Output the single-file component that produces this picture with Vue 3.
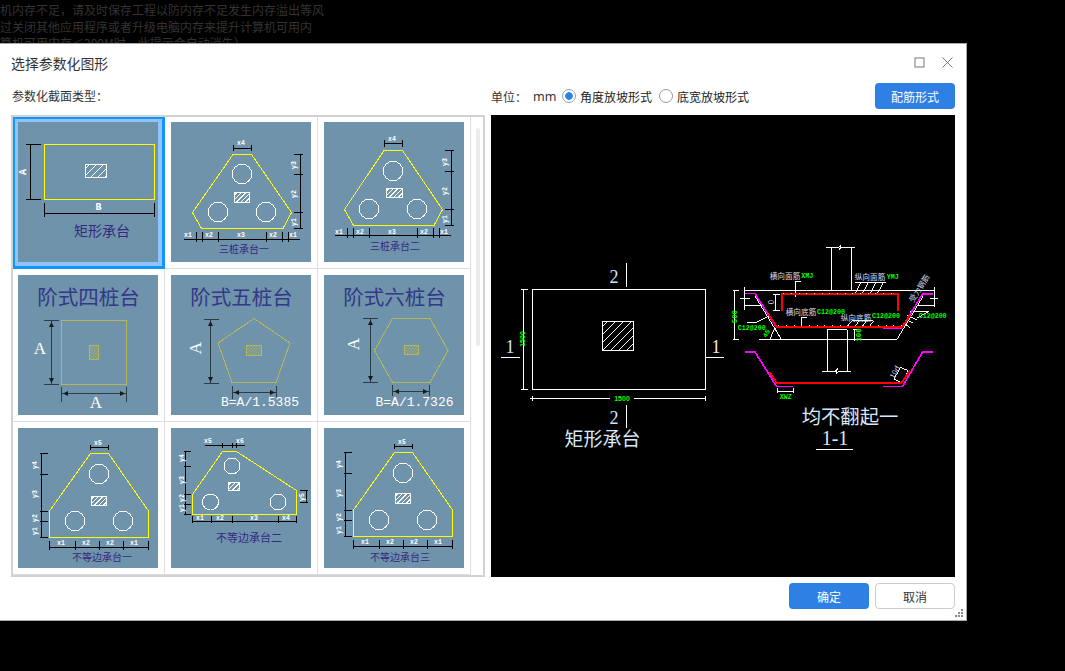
<script setup>
const L = (a, b, c, d) => `M${a} ${b}L${c} ${d}`
const H = (y, a, b) => L(a, y, b, y)
const V = (x, a, b) => L(x, a, x, b)
const hatch = (x, y, w, h, step) => {
  let d = ''
  for (let s = step * 0.6; s < w + h; s += step) {
    const x1 = x + Math.max(0, s - h)
    const y1 = y + Math.min(h, s)
    const x2 = x + Math.min(w, s)
    const y2 = y + Math.max(0, s - w)
    d += L(x1.toFixed(1), y1.toFixed(1), x2.toFixed(1), y2.toFixed(1))
  }
  return d
}
const m = (s, x, y, r) => ({ s, x, y, r })

const triA = {
  edge: 'M62 32.5H80.5L120.5 90.5L112 106.5H30.5L21.5 90.5Z',
  ink:
    H(26.5, 62.5, 80.5) + V(62.5, 23, 29) + V(80.5, 23, 29) +
    V(129.5, 32.5, 106.5) + H(32.5, 123, 132) + H(52.5, 123, 132) + H(90.5, 123, 132) + H(106.5, 123, 132) +
    H(117.5, 13, 129) + [25.5, 31.5, 47.5, 95.5, 111.5, 117.5].map((x) => V(x, 110, 120)).join(''),
  holes: [[71, 52], [47, 90], [95, 90]],
  box: [63.5, 70.5, 15, 10],
  marks: [m('x4', 70, 21), m('x1', 17, 113), m('x2', 38, 113), m('x3', 70, 113), m('x2', 102, 113), m('x1', 122, 113), m('y3', 123, 43, 1), m('y2', 123, 72, 1), m('y1', 123, 100, 1)]
}
const triB = {
  edge: 'M60 28.5H78.5L118.5 87.5L110 103.5H29.5L20.5 87.5Z',
  ink:
    H(21.5, 60.5, 78.5) + V(60.5, 18, 25) + V(78.5, 18, 25) +
    V(127.5, 28.5, 103.5) + H(28.5, 121, 130) + H(49.5, 121, 130) + H(87.5, 121, 130) + H(103.5, 121, 130) +
    H(113.5, 11, 127) + [23.5, 29.5, 45.5, 93.5, 109.5, 115.5].map((x) => V(x, 106, 116)).join(''),
  holes: [[69, 49], [45, 87], [93, 87]],
  box: [62.5, 66.5, 16, 9],
  marks: [m('x4', 68, 17), m('x1', 15, 110), m('x2', 36, 110), m('x3', 68, 110), m('x2', 100, 110), m('x1', 120, 110), m('y3', 121, 40, 1), m('y2', 121, 69, 1), m('y1', 121, 97, 1)]
}
const ineqA = (dx, dy) => ({
  edge: `M${72.5 + dx} ${25.5 + dy}H${90.5 + dx}L${130.5 + dx} ${83 + dy}V${109.5 + dy}H${31.5 + dx}V${83 + dy}Z`,
  ink:
    H(19.5 + dy, 72.5 + dx, 90.5 + dx) + V(72.5 + dx, 17 + dy, 22 + dy) + V(90.5 + dx, 17 + dy, 22 + dy) +
    V(23.5 + dx, 25.5 + dy, 109.5 + dy) +
    [25.5, 46.5, 83.5, 93.5, 109.5].map((y) => H(y + dy, 22 + dx, 30 + dx)).join('') +
    H(119.5 + dy, 31.5 + dx, 130.5 + dx) +
    [31.5, 57.5, 81.5, 105.5, 130.5].map((x) => V(x + dx, 113 + dy, 122 + dy)).join(''),
  holes: [[81 + dx, 46 + dy], [57 + dx, 93 + dy], [105 + dx, 93 + dy]],
  marks: [
    m('x5', 80 + dx, 15 + dy), m('x1', 43 + dx, 115 + dy), m('x2', 68 + dx, 115 + dy), m('x2', 92 + dx, 115 + dy), m('x1', 116 + dx, 115 + dy),
    m('y4', 17 + dx, 37 + dy, 1), m('y3', 17 + dx, 66 + dy, 1), m('y2', 17 + dx, 90 + dy, 1), m('y1', 17 + dx, 103 + dy, 1)
  ]
})

const tiles = [
  {
    id: 1,
    selected: true,
    edge: 'M26.5 22.5H136.5V77.5H26.5Z',
    ink: V(12.5, 22.5, 77.5) + H(22.5, 8, 23) + H(77.5, 8, 23) + H(91.5, 26.5, 136.5) + V(26.5, 81, 95) + V(136.5, 81, 95),
    holes: [],
    box: [67.5, 42.5, 21, 13],
    step: 7,
    big: [m('A', 5.5, 50, 1), m('B', 80.5, 85)],
    title: { s: '矩形承台', x: 84, y: 110, size: 14 }
  },
  { id: 2, ...triA, title: { s: '三桩承台一', x: 73, y: 128.5, size: 10 } },
  { id: 3, ...triB, title: { s: '三桩承台二', x: 71, y: 125, size: 10 } },
  {
    id: 4,
    soft: true,
    edge: 'M43.5 45.5H108.5V109.5H43.5Z',
    ink: V(33.5, 45.5, 109.5) + H(45.5, 26, 41) + H(109.5, 26, 41) + H(118.5, 43.5, 108.5) + V(43.5, 112, 127) + V(108.5, 112, 127),
    arrows: 'M33.5 47L31 52H36ZM33.5 108L31 103H36ZM45 118.5L50 116V121ZM107 118.5L102 116V121Z',
    softBox: [71.5, 70.5, 9, 14],
    softFill: hatch(71.5, 70.5, 9, 14, 3),
    large: [m('A', 22, 75), m('A', 78, 129)],
    title: { s: '阶式四桩台', x: 70.5, y: 24, size: 20.5 }
  },
  {
    id: 5,
    soft: true,
    edge: 'M83 43.5L119 68L105 107.5H61L47 68Z',
    ink: V(39.5, 44.5, 108.5) + H(44.5, 33, 48) + H(108.5, 33, 48) + H(117.5, 61.5, 105.5) + V(61.5, 111, 124) + V(105.5, 111, 122),
    arrows: 'M39.5 46L37 51H42ZM39.5 107L37 102H42ZM63 117.5L68 115V120ZM104 117.5L99 115V120Z',
    softBox: [75.5, 70.5, 15, 10],
    softFill: hatch(75.5, 70.5, 15, 10, 3),
    large: [m('A', 26, 73, 1)],
    formula: { s: 'B=A/1.5385', x: 89, y: 128 },
    title: { s: '阶式五桩台', x: 70.5, y: 24, size: 20.5 }
  },
  {
    id: 6,
    soft: true,
    edge: 'M68.5 43.5H106L124 75.5L106 107.5H68.5L50.5 75.5Z',
    ink: V(46.5, 43.5, 107.5) + H(43.5, 39, 54) + H(107.5, 39, 54) + H(116.5, 68.5, 105.5) + V(68.5, 110, 121) + V(105.5, 110, 121),
    arrows: 'M46.5 45L44 50H49ZM46.5 106L44 101H49ZM70 116.5L75 114V119ZM104 116.5L99 114V119Z',
    softBox: [80.5, 70.5, 14, 9],
    softFill: hatch(80.5, 70.5, 14, 9, 3),
    large: [m('A', 31, 69, 1)],
    formula: { s: 'B=A/1.7326', x: 90.5, y: 128 },
    title: { s: '阶式六桩台', x: 70.5, y: 24, size: 20.5 }
  },
  { id: 7, ...ineqA(0, 0), box: [73.5, 68.5, 15, 9], title: { s: '不等边承台一', x: 84, y: 130.5, size: 10 } },
  {
    id: 8,
    edge: 'M51.5 23.5H65.5L125.5 62.5V86.5H21.5V66.5Z',
    ink:
      H(17.5, 34, 74) + [51.5, 61.5, 65.5].map((x) => V(x, 15, 20)).join('') +
      V(14.5, 23.5, 86.5) + [23.5, 38.5, 66.5, 76.5, 86.5].map((y) => H(y, 12.5, 20)).join('') +
      V(135.5, 62.5, 74.5) + H(62.5, 129, 137) + H(74.5, 129, 137) +
      H(93.5, 21.5, 125.5) + [21.5, 40.5, 61.5, 107.5, 125.5].map((x) => V(x, 88, 95)).join(''),
    holes: [[61, 38, 8], [39.5, 74, 8], [107, 74, 8]],
    box: [57.5, 54.5, 11, 8],
    marks: [m('x5', 37, 13), m('x6', 69, 13), m('x1', 29, 90), m('x2', 49, 90), m('x3', 83, 90), m('x4', 115, 90), m('y4', 11, 30, 1), m('y3', 11, 52, 1), m('y2', 11, 70, 1), m('y1', 11, 80, 1), m('y5', 131, 69, 1)],
    title: { s: '不等边承台二', x: 78, y: 111.5, size: 11 }
  },
  { id: 9, ...ineqA(-2, -1), box: [71.5, 65.5, 15, 10], title: { s: '不等边承台三', x: 76, y: 130, size: 10 } }
].map((t) => ({ ...t, fill: t.box ? hatch(t.box[0], t.box[1], t.box[2], t.box[3], t.step || 4.5) : '' }))

const planHatch = hatch(602.5, 321.5, 31, 29, 8)
const sectionLines = [
  'M306 152V22M364 152V22M289 22H327L333 14L328 30L334 22H375',
  'M45 152H613M45 142V210M613 142V200M30 175H60M600 175H625',
  'M75 168L155 300M500 300L580 168M88 300H500',
  'M292 395V270H352V395M275 395H316L322 385L318 403L324 395H363',
  'M15 152V300M8 152H28M8 300H28',
  'M45 196H95M50 247H80L118 228M563 196H613M540 214H597L560 235',
  'M196 172V125H212M137 163V212M128 163H150M128 212H150',
  'M375 127H468M373 165L393 127M395 165L415 127M418 165L438 127M440 165L460 127',
  'M214 265V232H232M350 262L366 242H430M372 262L388 242M394 262L410 242M416 262L432 242',
  'M118 300L135 265M135 265L155 300',
  'M375 302V270M368 270H385M368 300H385',
  'M142 445V460M190 445V460M142 456H190',
  'M535 392L515 428M511 382L492 418M511 382L535 392M492 418L515 428',
  'M530 225L560 240M520 250L540 262M530 240L550 250'
]
</script>

<template>
  <div class="desktop">
    <div class="backdrop">
      <p>机内存不足，请及时保存工程以防内存不足发生内存溢出等风</p>
      <p>过关闭其他应用程序或者升级电脑内存来提升计算机可用内</p>
      <p>算机可用内存＜200M时，此提示会自动消失）</p>
    </div>

    <section class="dialog">
      <header class="titlebar">
        <h1>选择参数化图形</h1>
        <div class="window-actions">
          <svg width="11" height="11" viewBox="0 0 11 11"><rect x="1" y="1" width="9" height="9" class="win-icon" /></svg>
          <svg width="13" height="13" viewBox="0 0 13 13"><path d="M1.5 1.5L11.5 11.5M11.5 1.5L1.5 11.5" class="win-icon" /></svg>
        </div>
      </header>

      <div class="toolbar">
        <div class="type-label">参数化截面类型：</div>
        <div class="options">
          <span class="unit">单位：</span>
          <span class="mm">mm</span>
          <span class="radio on"></span>
          <span class="radio-text">角度放坡形式</span>
          <span class="radio"></span>
          <span class="radio-text">底宽放坡形式</span>
          <button class="btn primary rebar">配筋形式</button>
        </div>
      </div>

      <div class="main">
        <div class="gallery">
          <div class="grid">
            <div v-for="t in tiles" :key="t.id" class="cell" :class="{ selected: t.selected }">
              <svg class="thumb" width="140" height="140" viewBox="0 0 140 140">
                <path class="ink" :class="{ softink: t.soft }" :d="t.ink" />
                <path v-if="t.arrows" class="arrow" :d="t.arrows" />
                <path class="edge" :class="{ softedge: t.soft }" :d="t.edge" />
                <circle v-for="(c, i) in t.holes || []" :key="i" class="hole" :cx="c[0]" :cy="c[1]" :r="c[2] || 9.7" />
                <template v-if="t.box">
                  <rect class="hole" :x="t.box[0]" :y="t.box[1]" :width="t.box[2]" :height="t.box[3]" />
                  <path class="hole" :d="t.fill" />
                </template>
                <template v-if="t.softBox">
                  <rect class="softbox" :x="t.softBox[0]" :y="t.softBox[1]" :width="t.softBox[2]" :height="t.softBox[3]" />
                  <path class="softbox" :d="t.softFill" />
                </template>
                <text v-for="(q, i) in t.marks || []" :key="'m' + i" class="mark" :x="q.x" :y="q.y" :transform="q.r ? `rotate(-90 ${q.x} ${q.y})` : null">{{ q.s }}</text>
                <text v-for="(q, i) in t.big || []" :key="'b' + i" class="bigmark" :x="q.x" :y="q.y" :transform="q.r ? `rotate(-90 ${q.x} ${q.y})` : null">{{ q.s }}</text>
                <text v-for="(q, i) in t.large || []" :key="'l' + i" class="largemark" :x="q.x" :y="q.y" :transform="q.r ? `rotate(-90 ${q.x} ${q.y})` : null">{{ q.s }}</text>
                <text v-if="t.formula" class="formula" :x="t.formula.x" :y="t.formula.y">{{ t.formula.s }}</text>
                <text class="tile-title" :class="{ softtitle: t.soft }" :x="t.title.x" :y="t.title.y" :font-size="t.title.size">{{ t.title.s }}</text>
              </svg>
            </div>
          </div>
          <div class="scrolltrack"><div class="scrollthumb"></div></div>
        </div>

        <svg class="preview" width="464" height="462" viewBox="491 115 464 462">
          <g class="plan">
            <rect x="532.5" y="289.5" width="173" height="100" />
            <rect x="602.5" y="321.5" width="31" height="29" />
            <path :d="planHatch" />
            <path d="M626.5 263V287M626.5 405V428M501 357.5H520M705.5 357.5H724M523.5 289.5V389.5M521 289.5H528M521 389.5H528M530 398.5H610M634 398.5H706M532.5 396V401M705.5 396V401" />
          </g>
          <text class="sec-num" x="614" y="279">2</text>
          <text class="sec-num" x="614" y="420">2</text>
          <text class="sec-num" x="510" y="349">1</text>
          <text class="sec-num warm" x="716" y="349">1</text>
          <text class="dim-green" x="523.5" y="339" transform="rotate(-90 523.5 339)">1500</text>
          <text class="dim-green" x="622" y="399">1500</text>
          <text class="draw-title" x="602.5" y="441">矩形承台</text>

          <g transform="translate(730 240) scale(0.3333)">
            <path v-for="(d, i) in sectionLines" :key="i" class="sec-line" :d="d" />
            <path class="magenta" d="M45 161H75L140 263H190M460 264H515L578 162H610" />
            <path class="red" d="M156 212V162H504V212M115 222L140 261H518L541 225" />
            <path class="dots" d="M160 162H500M145 258H515" />
            <path class="magenta" d="M45 336H75L140 440H190M460 440H517L578 336H608" />
            <path class="red" d="M118 395L140 428H515L540 392" />
            <text class="cad-white" x="165" y="111">横向面筋</text>
            <text class="cad-green" x="232" y="110">XMJ</text>
            <text class="cad-white" x="420" y="115">纵向面筋</text>
            <text class="cad-green" x="488" y="113">YMJ</text>
            <text class="cad-white" x="213" y="220">横向底筋</text>
            <text class="cad-green" x="303" y="218">C12@200</text>
            <text class="cad-white" x="378" y="236">纵向底筋</text>
            <text class="cad-green" x="468" y="230">C12@200</text>
            <text class="cad-green" x="65" y="265">C12@200</text>
            <text class="cad-green" x="608" y="229">C12@200</text>
            <text class="cad-green" x="167" y="471">XWZ</text>
            <text class="cad-green big" x="15" y="230" transform="rotate(-90 15 230)">500</text>
            <text class="cad-green big" x="388" y="285" transform="rotate(-90 388 285)">100</text>
            <text class="cad-white" x="125" y="186" transform="rotate(-90 125 186)">0</text>
            <text class="cad-green" x="110" y="281" transform="rotate(-60 110 281)">45</text>
            <text class="cad-white" x="497" y="397" transform="rotate(-62 497 397)">10d</text>
            <text class="cad-white" x="570" y="146" transform="rotate(-58 570 146)">受力钢筋</text>
            <text class="big-white" x="360" y="536">均不翻起一</text>
            <text class="big-num" x="315" y="600">1-1</text>
            <path class="sec-line" d="M258 628H368" />
          </g>
        </svg>
      </div>

      <footer class="footer">
        <button class="btn primary">确定</button>
        <button class="btn plain">取消</button>
      </footer>

      <svg class="grip" width="9" height="9" viewBox="0 0 9 9">
        <path d="M6 0h2v2H6zM3 3h2v2H3zM6 3h2v2H6zM0 6h2v2H0zM3 6h2v2H3zM6 6h2v2H6z" />
      </svg>
    </section>
  </div>
</template>

<style>
html, body { margin: 0; background: #000; }
</style>

<style scoped>
.desktop {
  width: 1065px;
  height: 671px;
  overflow: hidden;
  background: #000;
  font-family: "Noto Sans CJK SC", "Noto Sans", sans-serif;
}
.backdrop {
  height: 43px;
  overflow: hidden;
  padding-top: 2px;
  box-sizing: border-box;
  color: #333;
  font-size: 12px;
  line-height: 16.5px;
}
.backdrop p { margin: 0; white-space: nowrap; }
.dialog {
  position: relative;
  box-sizing: border-box;
  width: 967px;
  height: 578px;
  background: #fff;
  border-top: 1px solid #a8a8a8;
  border-right: 1px solid #a8a8a8;
  border-bottom: 1px solid #a8a8a8;
  display: flex;
  flex-direction: column;
}
.titlebar {
  height: 37px;
  flex: none;
  display: flex;
  align-items: center;
  justify-content: space-between;
  padding: 0 12px 0 11px;
}
.titlebar h1 {
  margin: 0;
  font-size: 13.9px;
  font-weight: 400;
  color: #333;
}
.window-actions { display: flex; align-items: center; gap: 16px; }
.window-actions svg { display: block; }
.win-icon { fill: none; stroke: #777; stroke-width: 1; }
.toolbar {
  height: 34px;
  flex: none;
  display: flex;
  padding-left: 12px;
  font-size: 12px;
  color: #333;
}
.type-label { width: 479px; line-height: 30px; }
.options { width: 464px; display: flex; align-items: center; height: 28px; margin-top: 1px; }
.unit { width: 42px; }
.mm { width: 29px; font-family: "Noto Sans", sans-serif; font-size: 12.5px; }
.radio {
  width: 14px;
  height: 14px;
  box-sizing: border-box;
  border: 1px solid #999;
  border-radius: 50%;
  margin-right: 4px;
  flex: none;
}
.radio.on {
  border-color: #8aa;
  background: radial-gradient(circle, #2f80e4 0 3.5px, #fff 4px);
}
.radio-text { width: 79px; color: #222; }
.btn {
  width: 80px;
  height: 26px;
  border-radius: 4px;
  font: 12px "Noto Sans CJK SC", "Noto Sans", sans-serif;
  padding: 0;
  cursor: pointer;
}
.primary { background: #2f80e4; color: #fff; border: 0; }
.plain { background: #fff; color: #333; border: 1px solid #ccc; }
.rebar { margin-left: auto; }
.main {
  height: 462px;
  flex: none;
  display: flex;
  gap: 6px;
  padding-left: 11px;
}
.gallery {
  box-sizing: border-box;
  width: 474px;
  height: 462px;
  border: 2px solid #d2d2d2;
  display: flex;
  overflow: hidden;
}
.grid {
  display: grid;
  grid-template-columns: 152px 153px 153px;
  grid-template-rows: 152px 153px 153px;
  flex: none;
}
.cell {
  box-sizing: border-box;
  display: flex;
  justify-content: flex-end;
  align-items: flex-end;
  padding: 0 6px 6px 0;
  border-right: 1px solid #ddd;
  border-bottom: 1px solid #ddd;
}
.cell.selected {
  border-color: #0f97ff;
  box-shadow: inset 0 0 0 2px #0f97ff, inset 0 0 0 6px #90c4ff;
}
.thumb { display: block; background: #6f93aa; }
.ink { fill: none; stroke: #000; stroke-width: 1; shape-rendering: crispEdges; }
.softink { stroke: #2c3c46; }
.arrow { fill: #1a1a1a; }
.edge { fill: none; stroke: #ff0; stroke-width: 1; shape-rendering: crispEdges; }
.softedge { stroke: #b4b65a; }
.hole { fill: none; stroke: #fff; stroke-width: 1; shape-rendering: crispEdges; }
.softbox { fill: none; stroke: #b4b65a; stroke-width: 1; }
.mark {
  font: bold 6.5px "Liberation Mono", monospace;
  fill: #fff;
  text-anchor: middle;
  dominant-baseline: middle;
}
.bigmark {
  font: bold 10px "Liberation Mono", monospace;
  fill: #fff;
  text-anchor: middle;
  dominant-baseline: middle;
}
.largemark {
  font: 17px "Liberation Serif", serif;
  fill: #fff;
  text-anchor: middle;
  dominant-baseline: middle;
}
.formula {
  font: 13px "Liberation Mono", monospace;
  fill: #fff;
  text-anchor: middle;
  dominant-baseline: middle;
}
.tile-title {
  fill: #342a82;
  text-anchor: middle;
  dominant-baseline: middle;
  font-family: "Noto Sans CJK SC", sans-serif;
}
.softtitle { fill: #333888; }
.scrolltrack { flex: 1; padding: 11px 3px 0 5px; }
.scrollthumb { width: 4px; height: 218px; background: #ebebeb; border-radius: 2px; }
.preview { display: block; background: #000; flex: none; }
.plan { fill: none; stroke: #fff; stroke-width: 1; shape-rendering: crispEdges; }
.plan rect, .plan path { fill: none; }
.sec-num {
  font: 18px "Liberation Serif", serif;
  fill: #cfe4ff;
  text-anchor: middle;
  dominant-baseline: middle;
}
.warm { fill: #ffe6c8; }
.dim-green {
  font: bold 7px "Liberation Sans", sans-serif;
  fill: #0f0;
  text-anchor: middle;
  dominant-baseline: middle;
}
.draw-title {
  font: 19px "Noto Sans CJK SC", sans-serif;
  fill: #d8e8fb;
  text-anchor: middle;
  dominant-baseline: middle;
}
.sec-line { fill: none; stroke: #fff; stroke-width: 3; shape-rendering: crispEdges; }
.magenta { fill: none; stroke: #f0f; stroke-width: 5; shape-rendering: crispEdges; }
.red { fill: none; stroke: #f00; stroke-width: 6; shape-rendering: crispEdges; }
.dots { fill: none; stroke: #ff0; stroke-width: 3; stroke-dasharray: 3 20; shape-rendering: crispEdges; }
.cad-white {
  font: 23px "Noto Sans CJK SC", sans-serif;
  fill: #dde;
  text-anchor: middle;
  dominant-baseline: middle;
}
.cad-green {
  font: bold 20px "Liberation Mono", monospace;
  fill: #0f0;
  text-anchor: middle;
  dominant-baseline: middle;
}
.cad-green.big { font-size: 22px; }
.big-white {
  font: 58px "Noto Sans CJK SC", sans-serif;
  fill: #d8e8fb;
  text-anchor: middle;
  dominant-baseline: middle;
}
.big-num {
  font: 60px "Liberation Serif", serif;
  fill: #d8e8fb;
  text-anchor: middle;
  dominant-baseline: middle;
}
.footer {
  flex: 1;
  display: flex;
  justify-content: flex-end;
  gap: 6px;
  padding: 6px 11px 0 0;
  box-sizing: border-box;
}
.grip { position: absolute; right: 2px; bottom: 2px; fill: #888; }
</style>
